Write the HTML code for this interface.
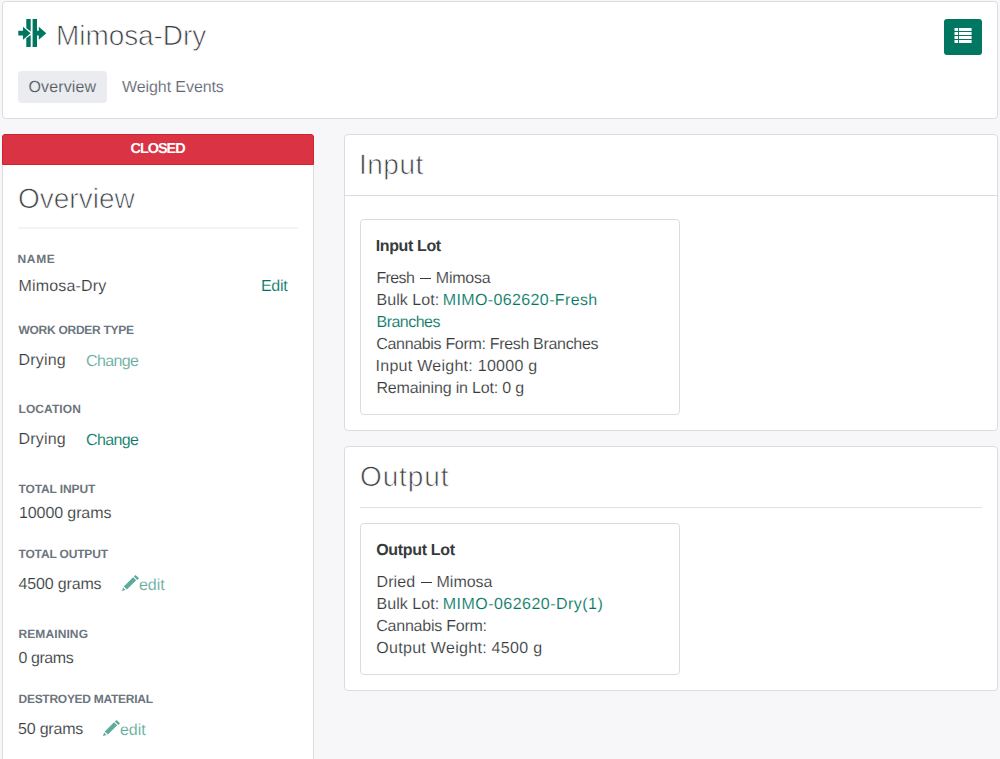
<!DOCTYPE html>
<html><head><meta charset="utf-8"><title>Mimosa-Dry</title>
<style>
html,body{margin:0;padding:0;width:1000px;height:759px;overflow:hidden}
#w{position:absolute;left:0;top:0;width:1000px;height:759px;overflow:hidden}
body{width:1000px;height:759px;overflow:hidden;background:#f7f7f9;font-family:"Liberation Sans",sans-serif;position:relative}
.b{position:absolute;box-sizing:border-box}
.card{background:#fff;border:1px solid #dcdcdf;border-radius:4px}
.t{position:absolute;white-space:nowrap;line-height:1;display:block;text-rendering:geometricPrecision}
.t{-webkit-text-stroke:0.15px #fff;paint-order:fill stroke}
.t[style*='font-weight:700']{-webkit-text-stroke:0}
.lt{-webkit-text-stroke:0.75px #fff}
#tab1{-webkit-text-stroke-color:#eaecf0}
#closed{-webkit-text-stroke:0}
svg{position:absolute;overflow:visible}
</style></head><body><div id="w">
<div class="b card" style="left:2px;top:1px;width:996px;height:118px"></div>
<div class="b" style="left:18px;top:71px;width:89px;height:32px;background:#eaecf0;border-radius:4px"></div>
<div class="b" style="left:944px;top:19px;width:38px;height:36px;background:#007761;border-radius:3px"></div>
<svg style="left:954px;top:28px" width="18" height="16" viewBox="0 0 18 16">
<g fill="#fff"><rect x="0.5" y="0" width="3.6" height="3"/><rect x="5" y="0" width="12.6" height="3"/>
<rect x="0.5" y="4" width="3.6" height="3"/><rect x="5" y="4" width="12.6" height="3"/>
<rect x="0.5" y="8" width="3.6" height="3"/><rect x="5" y="8" width="12.6" height="3"/>
<rect x="0.5" y="12" width="3.6" height="3"/><rect x="5" y="12" width="12.6" height="3"/></g></svg>
<svg style="left:18px;top:19px" width="29" height="28" viewBox="18 19 29 28">
<g fill="#00755f">
<path d="M26.3 19h4.4v12.6l-4.4-3.6zM26.3 47h4.4v-12l-4.4 3.3z"/>
<path d="M18.3 30.8h4.7v-4l7.6 6.4-7.6 6.5v-4.1h-4.7z"/>
<rect x="32.6" y="19" width="4.4" height="28"/>
<path d="M37 30.8h1.8v-4l7.5 6.4-7.5 6.5v-4.1H37z"/>
</g></svg>

<div class="b card" style="left:2px;top:134px;width:312px;height:700px"></div>
<div class="b" style="left:2px;top:134px;width:312px;height:31px;background:#da3444;border:1px solid #d2212f;border-radius:3px 3px 0 0"></div>
<div class="b" style="left:18px;top:227px;width:280px;height:2px;background:#f3f4f6"></div>

<div class="b card" style="left:344px;top:134px;width:654px;height:297px"></div>
<div class="b" style="left:345px;top:195px;width:652px;height:1px;background:#dcdcdf"></div>
<div class="b card" style="left:360px;top:219px;width:320px;height:196px"></div>

<div class="b card" style="left:344px;top:446px;width:654px;height:245px"></div>
<div class="b" style="left:360px;top:507px;width:622px;height:1px;background:#dfe0e3"></div>
<div class="b card" style="left:360px;top:523px;width:320px;height:152px"></div>

<svg style="left:122px;top:575px" width="17" height="16" viewBox="0 0 17 16"><g fill="#5faa9c">
<path d="M0 16L1.1 12.4L3.5 14.9zM1.8 11.6L11 2.2L14.2 5.3L4.9 14.6zM11.8 1.5L13.5 0L17 3.3L15.3 4.9z"/></g></svg>
<svg style="left:103px;top:720px" width="17" height="16" viewBox="0 0 17 16"><g fill="#5faa9c">
<path d="M0 16L1.1 12.4L3.5 14.9zM1.8 11.6L11 2.2L14.2 5.3L4.9 14.6zM11.8 1.5L13.5 0L17 3.3L15.3 4.9z"/></g></svg>
<div class="b" style="left:419.5px;top:278px;width:11px;height:1px;background:#373a3c"></div>
<div class="b" style="left:420.5px;top:582px;width:11px;height:1px;background:#373a3c"></div>
<span id="title" class="t lt" style="left:56.00px;top:22px;font-size:28px;font-weight:400;color:#3d4145;letter-spacing:-0.067px">Mimosa-Dry</span>
<span id="tab1" class="t" style="left:28.50px;top:80px;font-size:16px;font-weight:400;color:#525960;letter-spacing:0.114px">Overview</span>
<span id="tab2" class="t" style="left:122.00px;top:80px;font-size:16px;font-weight:400;color:#5f6670;letter-spacing:-0.083px">Weight Events</span>
<span id="closed" class="t" style="left:130.50px;top:142px;font-size:14.5px;font-weight:700;color:#ffffff;letter-spacing:-1.040px">CLOSED</span>
<span id="ovh" class="t lt" style="left:18.00px;top:185px;font-size:28px;font-weight:400;color:#3d4145;letter-spacing:0.000px">Overview</span>
<span id="l1" class="t" style="left:17.50px;top:253px;font-size:12px;font-weight:700;color:#6c757d;letter-spacing:0.667px">NAME</span>
<span id="v1" class="t" style="left:18.50px;top:279px;font-size:16px;font-weight:400;color:#373a3c;letter-spacing:0.178px">Mimosa-Dry</span>
<span id="e1" class="t" style="left:261.00px;top:279px;font-size:16px;font-weight:400;color:#00755f;letter-spacing:-0.333px">Edit</span>
<span id="l2" class="t" style="left:18.50px;top:324px;font-size:12px;font-weight:700;color:#6c757d;letter-spacing:-0.271px">WORK ORDER TYPE</span>
<span id="v2" class="t" style="left:18.50px;top:353px;font-size:16px;font-weight:400;color:#373a3c;letter-spacing:0.200px">Drying</span>
<span id="c2" class="t" style="left:86.00px;top:354px;font-size:16px;font-weight:400;color:#5faa9c;letter-spacing:-0.640px">Change</span>
<span id="l3" class="t" style="left:18.50px;top:403px;font-size:12px;font-weight:700;color:#6c757d;letter-spacing:0.086px">LOCATION</span>
<span id="v3" class="t" style="left:18.50px;top:432px;font-size:16px;font-weight:400;color:#373a3c;letter-spacing:0.200px">Drying</span>
<span id="c3" class="t" style="left:86.00px;top:433px;font-size:16px;font-weight:400;color:#00755f;letter-spacing:-0.640px">Change</span>
<span id="l4" class="t" style="left:18.50px;top:483px;font-size:12px;font-weight:700;color:#6c757d;letter-spacing:-0.120px">TOTAL INPUT</span>
<span id="v4" class="t" style="left:19.00px;top:506px;font-size:16px;font-weight:400;color:#373a3c;letter-spacing:-0.100px">10000 grams</span>
<span id="l5" class="t" style="left:18.50px;top:548px;font-size:12px;font-weight:700;color:#6c757d;letter-spacing:-0.164px">TOTAL OUTPUT</span>
<span id="v5" class="t" style="left:18.50px;top:577px;font-size:16px;font-weight:400;color:#373a3c;letter-spacing:-0.156px">4500 grams</span>
<span id="ed5" class="t" style="left:139.00px;top:578px;font-size:16px;font-weight:400;color:#5faa9c;letter-spacing:-0.067px">edit</span>
<span id="l6" class="t" style="left:18.50px;top:628px;font-size:12px;font-weight:700;color:#6c757d;letter-spacing:0.100px">REMAINING</span>
<span id="v6" class="t" style="left:18.50px;top:651px;font-size:16px;font-weight:400;color:#373a3c;letter-spacing:-0.433px">0 grams</span>
<span id="l7" class="t" style="left:18.50px;top:693px;font-size:12px;font-weight:700;color:#6c757d;letter-spacing:-0.271px">DESTROYED MATERIAL</span>
<span id="v7" class="t" style="left:18.00px;top:722px;font-size:16px;font-weight:400;color:#373a3c;letter-spacing:-0.200px">50 grams</span>
<span id="ed7" class="t" style="left:120.00px;top:723px;font-size:16px;font-weight:400;color:#5faa9c;letter-spacing:-0.067px">edit</span>
<span id="inh" class="t lt" style="left:359.00px;top:151px;font-size:28px;font-weight:400;color:#3d4145;letter-spacing:0.500px">Input</span>
<span id="il" class="t" style="left:375.75px;top:239px;font-size:16px;font-weight:700;color:#373a3c;letter-spacing:-0.375px">Input Lot</span>
<span id="i1a" class="t" style="left:376.50px;top:271px;font-size:16px;font-weight:400;color:#373a3c;letter-spacing:-0.650px">Fresh</span>
<span id="i1b" class="t" style="left:435.75px;top:271px;font-size:16px;font-weight:400;color:#373a3c;letter-spacing:-0.200px">Mimosa</span>
<span id="i2a" class="t" style="left:376.50px;top:293px;font-size:16px;font-weight:400;color:#373a3c;letter-spacing:0.050px">Bulk Lot:</span>
<span id="i2b" class="t" style="left:442.75px;top:293px;font-size:16px;font-weight:400;color:#00755f;letter-spacing:0.375px">MIMO-062620-Fresh</span>
<span id="i3" class="t" style="left:376.50px;top:315px;font-size:16px;font-weight:400;color:#00755f;letter-spacing:-0.514px">Branches</span>
<span id="i4" class="t" style="left:376.25px;top:337px;font-size:16px;font-weight:400;color:#373a3c;letter-spacing:-0.321px">Cannabis Form: Fresh Branches</span>
<span id="i5" class="t" style="left:375.50px;top:359px;font-size:16px;font-weight:400;color:#373a3c;letter-spacing:0.270px">Input Weight: 10000 g</span>
<span id="i6" class="t" style="left:376.50px;top:381px;font-size:16px;font-weight:400;color:#373a3c;letter-spacing:-0.180px">Remaining in Lot: 0 g</span>
<span id="outh" class="t lt" style="left:360.00px;top:463px;font-size:28px;font-weight:400;color:#3d4145;letter-spacing:0.880px">Output</span>
<span id="ol" class="t" style="left:376.25px;top:543px;font-size:16px;font-weight:700;color:#373a3c;letter-spacing:-0.333px">Output Lot</span>
<span id="o1a" class="t" style="left:376.50px;top:575px;font-size:16px;font-weight:400;color:#373a3c;letter-spacing:0.100px">Dried</span>
<span id="o1b" class="t" style="left:436.50px;top:575px;font-size:16px;font-weight:400;color:#373a3c;letter-spacing:0.000px">Mimosa</span>
<span id="o2a" class="t" style="left:376.50px;top:597px;font-size:16px;font-weight:400;color:#373a3c;letter-spacing:0.050px">Bulk Lot:</span>
<span id="o2b" class="t" style="left:442.75px;top:597px;font-size:16px;font-weight:400;color:#00755f;letter-spacing:0.471px">MIMO-062620-Dry(1)</span>
<span id="o3" class="t" style="left:376.25px;top:619px;font-size:16px;font-weight:400;color:#373a3c;letter-spacing:-0.231px">Cannabis Form:</span>
<span id="o4" class="t" style="left:376.25px;top:641px;font-size:16px;font-weight:400;color:#373a3c;letter-spacing:0.300px">Output Weight: 4500 g</span>
</div></body></html>
